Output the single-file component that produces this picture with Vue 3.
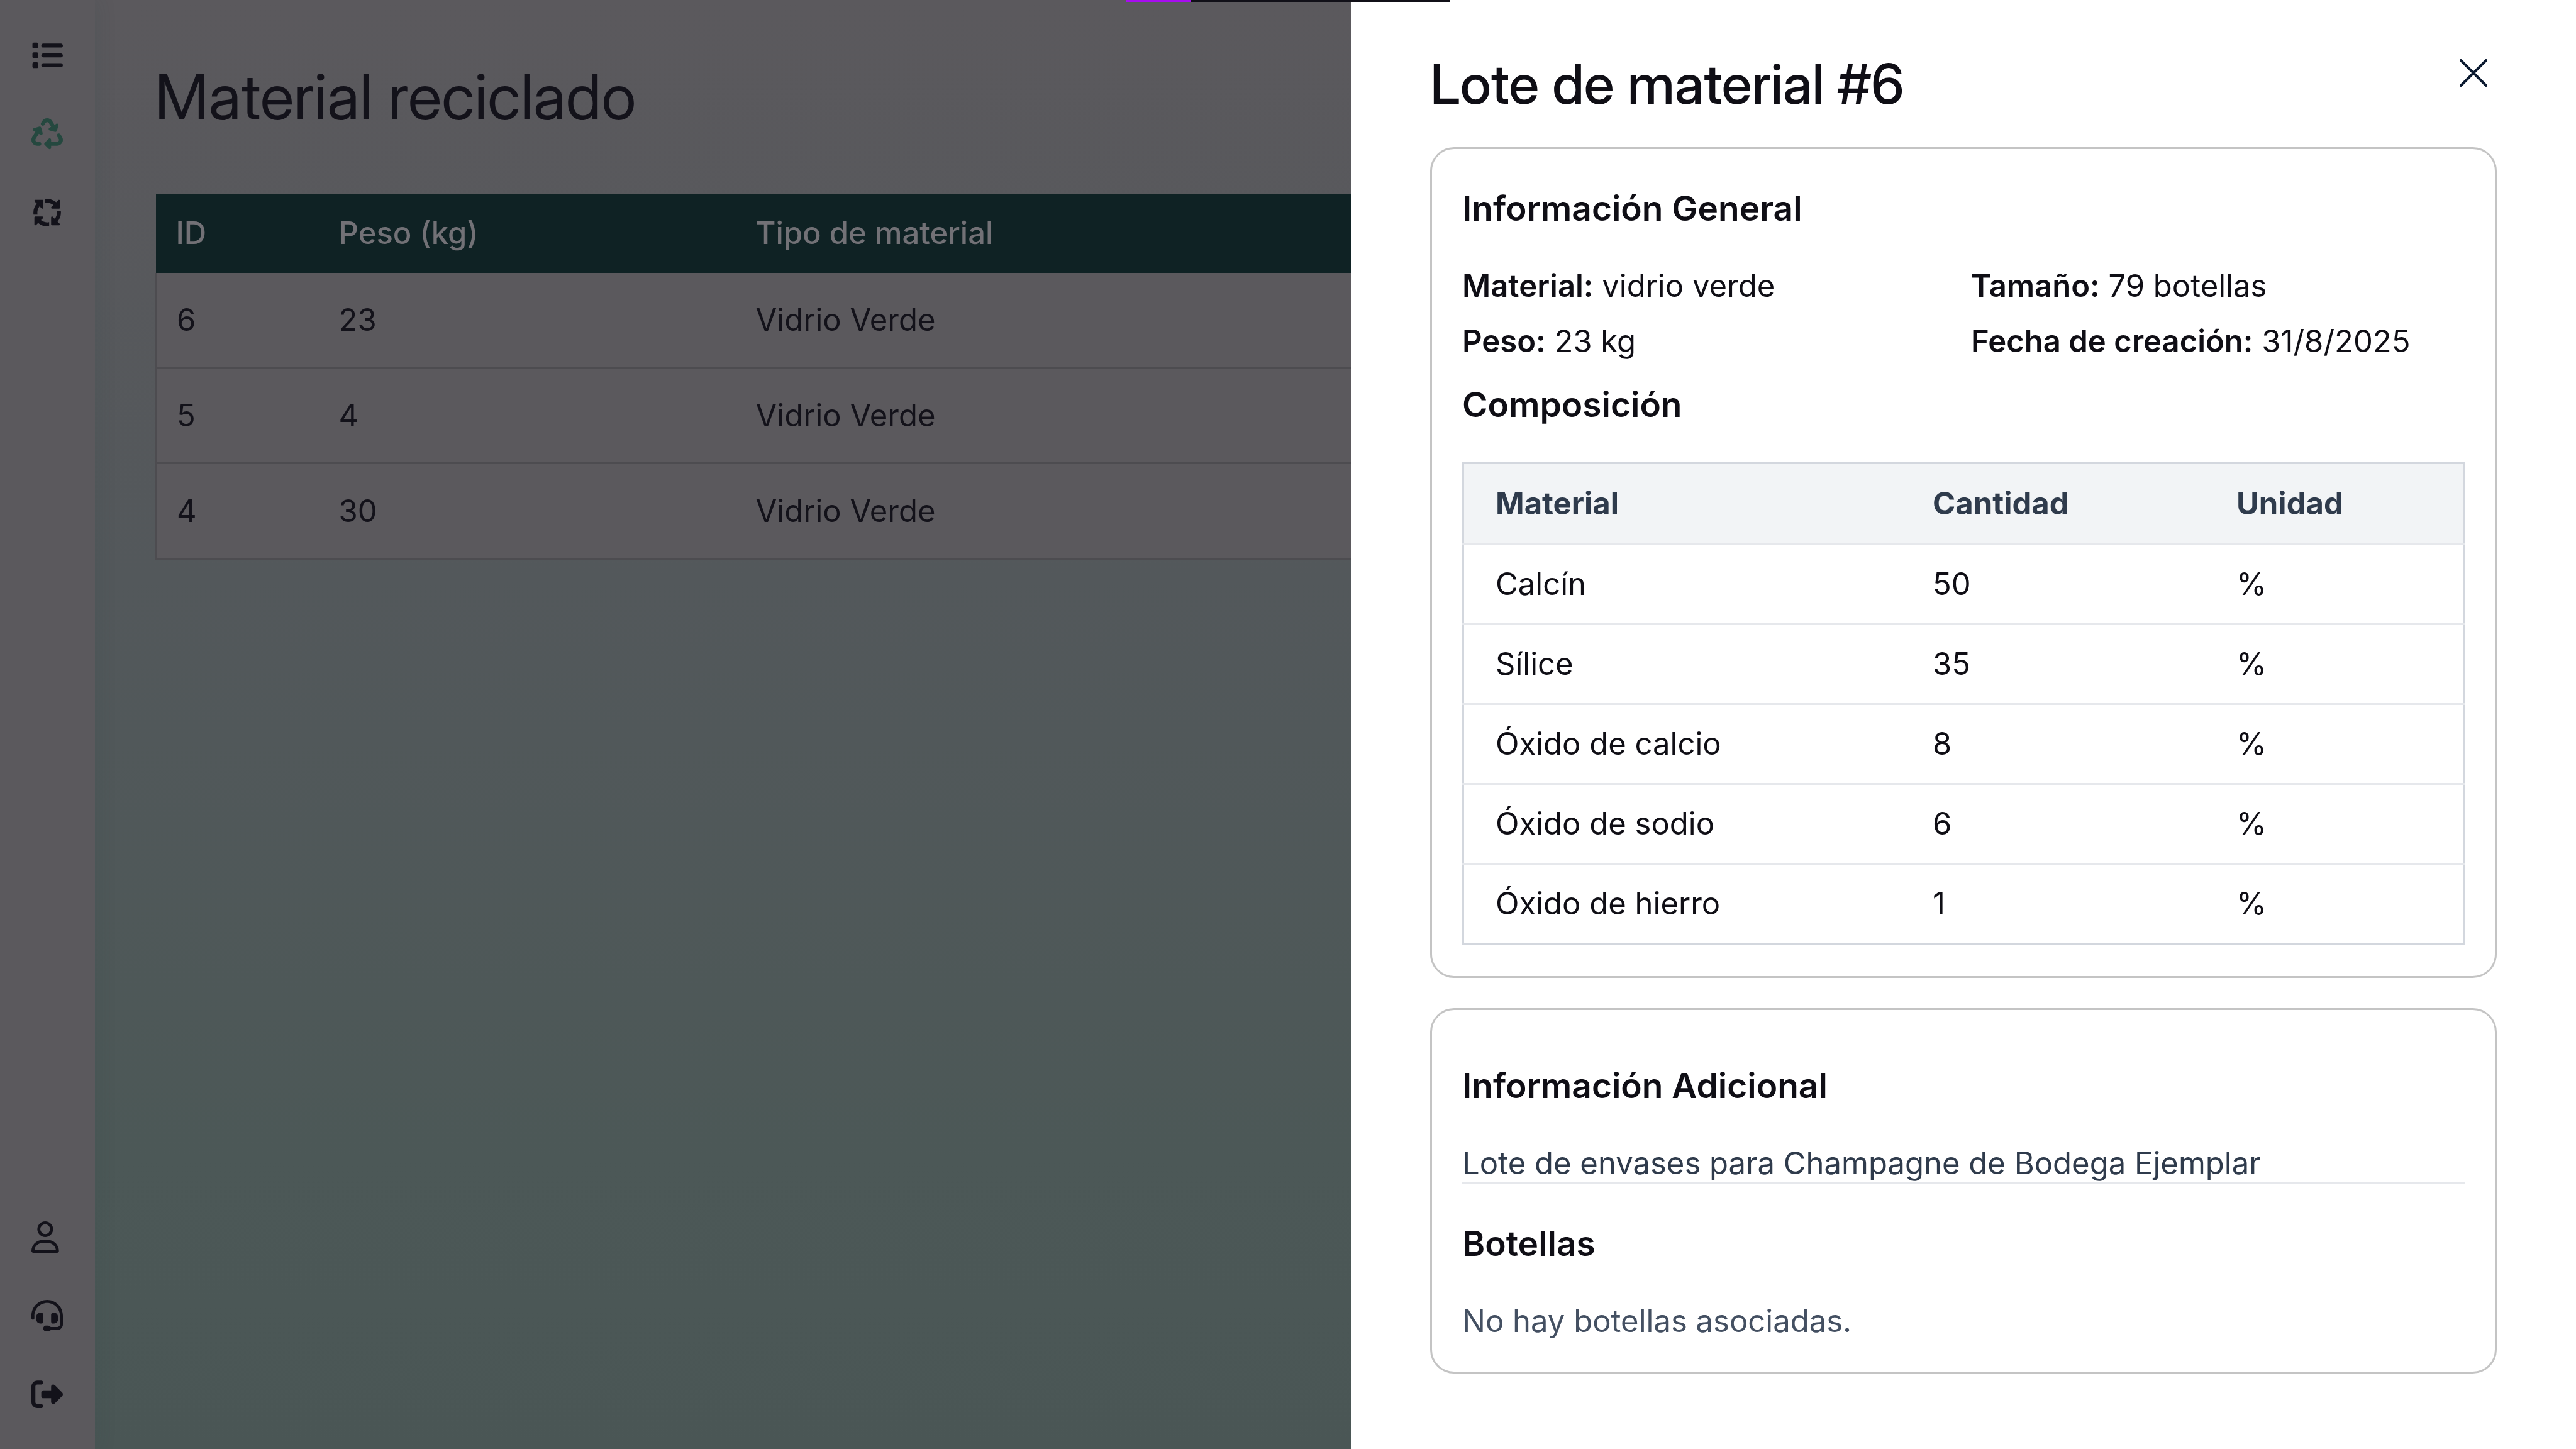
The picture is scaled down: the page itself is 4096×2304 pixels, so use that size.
<script setup>
const topLinks = [
  {
    label: 'Listado',
    active: false,
    box: '0 0 512 512',
    path: 'M40 48C26.7 48 16 58.7 16 72v48c0 13.3 10.7 24 24 24H88c13.3 0 24-10.7 24-24V72c0-13.3-10.7-24-24-24H40zM192 64c-17.7 0-32 14.3-32 32s14.3 32 32 32H480c17.7 0 32-14.3 32-32s-14.3-32-32-32H192zm0 160c-17.7 0-32 14.3-32 32s14.3 32 32 32H480c17.7 0 32-14.3 32-32s-14.3-32-32-32H192zm0 160c-17.7 0-32 14.3-32 32s14.3 32 32 32H480c17.7 0 32-14.3 32-32s-14.3-32-32-32H192zM16 232v48c0 13.3 10.7 24 24 24H88c13.3 0 24-10.7 24-24V232c0-13.3-10.7-24-24-24H40c-13.3 0-24 10.7-24 24zM40 368c-13.3 0-24 10.7-24 24v48c0 13.3 10.7 24 24 24H88c13.3 0 24-10.7 24-24V392c0-13.3-10.7-24-24-24H40z'
  },
  {
    label: 'Material reciclado',
    active: true,
    box: '0 0 512 512',
    path: 'M174.7 45.1C192.2 17 223 0 256 0s63.8 17 81.3 45.1l38.6 61.7 27-15.6c8.4-4.9 18.9-4.2 26.6 1.7s11.1 15.9 8.6 25.3l-23.4 87.4c-3.4 12.8-16.6 20.4-29.4 17l-87.4-23.4c-9.4-2.5-16.3-10.4-17.6-20s3.4-19.1 11.8-23.9l28.4-16.4L283 79c-5.8-9.3-16-15-27-15s-21.2 5.7-27 15l-17.5 28c-9.2 14.8-28.6 19.5-43.6 10.5c-15.3-9.2-20.2-29.2-10.7-44.4l17.5-28zM429.5 251.9c15-9 34.4-4.3 43.6 10.5l24.4 39.1c9.4 15.1 14.4 32.4 14.6 50.2c.3 53.1-42.7 96.4-95.8 96.4L320 448v32c0 9.7-5.8 18.5-14.8 22.2s-19.3 1.7-26.2-5.2l-64-64c-9.4-9.4-9.4-24.6 0-33.9l64-64c6.9-6.9 17.2-8.9 26.2-5.2s14.8 12.5 14.8 22.2v32l96.2 0c17.6 0 31.9-14.4 31.8-32c0-5.9-1.7-11.7-4.8-16.7l-24.4-39.1c-9.5-15.2-4.7-35.2 10.7-44.4zm-364.6-31L36 204.2c-8.4-4.9-13.1-14.3-11.8-23.9s8.2-17.5 17.6-20l87.4-23.4c12.8-3.4 26 4.2 29.4 17L182 241.2c2.5 9.4-.9 19.3-8.6 25.3s-18.2 6.6-26.6 1.7l-26.5-15.3L68.8 335.3c-3.1 5-4.8 10.8-4.8 16.7c-.1 17.6 14.2 32 31.8 32l32.2 0c17.7 0 32 14.3 32 32s-14.3 32-32 32l-32.2 0C42.7 448-.3 404.8 0 351.6c.1-17.8 5.1-35.1 14.6-50.2l50.3-80.5z'
  },
  {
    label: 'Procesos',
    active: false,
    box: '0 0 512 512',
    path: 'M256 96c38.4 0 73.7 13.5 101.3 36.1l-32.6 32.6c-4.6 4.6-5.9 11.5-3.5 17.4s8.3 9.9 14.8 9.9l112 0c8.8 0 16-7.2 16-16l0-112c0-6.5-3.9-12.3-9.9-14.8s-12.9-1.1-17.4 3.5l-34 34C363.4 52.6 312.1 32 256 32c-10.9 0-21.5 .8-32 2.3l0 64.7c10.3-2 21-3.1 32-3.1zM132.1 154.7l32.6 32.6c4.6 4.6 11.5 5.9 17.4 3.5s9.9-8.3 9.9-14.8l0-112c0-8.8-7.2-16-16-16L64 48c-6.5 0-12.3 3.9-14.8 9.9s-1.1 12.9 3.5 17.4l34 34C52.6 148.6 32 199.9 32 256c0 10.9 .8 21.5 2.3 32l64.7 0c-2-10.3-3.1-21-3.1-32c0-38.4 13.5-73.7 36.1-101.3zM477.7 224l-64.7 0c2 10.3 3.1 21 3.1 32c0 38.4-13.5 73.7-36.1 101.3l-32.6-32.6c-4.6-4.6-11.5-5.9-17.4-3.5s-9.9 8.3-9.9 14.8l0 112c0 8.8 7.2 16 16 16l112 0c6.5 0 12.3-3.9 14.8-9.9s1.1-12.9-3.5-17.4l-34-34C459.4 363.4 480 312.1 480 256c0-10.9-.8-21.5-2.3-32zM256 416c-38.4 0-73.7-13.5-101.3-36.1l32.6-32.6c4.6-4.6 5.9-11.5 3.5-17.4s-8.3-9.9-14.8-9.9L64 320c-8.8 0-16 7.2-16 16l0 112c0 6.5 3.9 12.3 9.9 14.8s12.9 1.1 17.4-3.5l34-34C148.6 459.4 199.9 480 256 480c10.9 0 21.5-.8 32-2.3l0-64.7c-10.3 2-21 3.1-32 3.1z'
  }
]

const bottomLinks = [
  {
    label: 'Perfil',
    box: '0 0 448 512',
    path: 'M304 128a80 80 0 1 0 -160 0 80 80 0 1 0 160 0zM96 128a128 128 0 1 1 256 0A128 128 0 1 1 96 128zM49.3 464H398.7c-8.9-63.3-63.3-112-129-112H178.3c-65.7 0-120.1 48.7-129 112zM0 482.3C0 383.8 79.8 304 178.3 304h91.4C368.2 304 448 383.8 448 482.3c0 16.4-13.3 29.7-29.7 29.7H29.7C13.3 512 0 498.7 0 482.3z'
  },
  {
    label: 'Soporte',
    box: '0 0 512 512',
    path: 'M256 48C141.1 48 48 141.1 48 256v40c0 13.3-10.7 24-24 24s-24-10.7-24-24V256C0 114.6 114.6 0 256 0S512 114.6 512 256V400.1c0 48.6-39.4 88-88.1 88L313.6 488c-8.3 14.3-23.8 24-41.6 24H240c-26.5 0-48-21.5-48-48s21.5-48 48-48h32c17.8 0 33.3 9.7 41.6 24l110.4 .1c22.1 0 40-17.9 40-40V256c0-114.9-93.1-208-208-208zM144 208h16c17.7 0 32 14.3 32 32V352c0 17.7-14.3 32-32 32H144c-35.3 0-64-28.7-64-64V272c0-35.3 28.7-64 64-64zm224 0c35.3 0 64 28.7 64 64v48c0 35.3-28.7 64-64 64H352c-17.7 0-32-14.3-32-32V240c0-17.7 14.3-32 32-32h16z'
  },
  {
    label: 'Cerrar sesión',
    box: '0 0 512 512',
    path: 'M377.9 105.9L500.7 228.7c7.2 7.2 11.3 17.1 11.3 27.3s-4.1 20.1-11.3 27.3L377.9 406.1c-6.4 6.4-15 9.9-24 9.9c-18.7 0-33.9-15.2-33.9-33.9l0-62.1-128 0c-17.7 0-32-14.3-32-32l0-64c0-17.7 14.3-32 32-32l128 0 0-62.1c0-18.7 15.2-33.9 33.9-33.9c9 0 17.6 3.6 24 9.9zM160 96L96 96c-17.7 0-32 14.3-32 32l0 256c0 17.7 14.3 32 32 32l64 0c17.7 0 32 14.3 32 32s-14.3 32-32 32l-64 0c-53 0-96-43-96-96L0 128C0 75 43 32 96 32l64 0c17.7 0 32 14.3 32 32s-14.3 32-32 32z'
  }
]

const batches = [
  { id: 6, weight: 23, material: 'Vidrio Verde' },
  { id: 5, weight: 4, material: 'Vidrio Verde' },
  { id: 4, weight: 30, material: 'Vidrio Verde' }
]

const composition = [
  { name: 'Calcín', amount: 50, unit: '%' },
  { name: 'Sílice', amount: 35, unit: '%' },
  { name: 'Óxido de calcio', amount: 8, unit: '%' },
  { name: 'Óxido de sodio', amount: 6, unit: '%' },
  { name: 'Óxido de hierro', amount: 1, unit: '%' }
]
</script>

<template>
  <div class="app">
    <nav class="sidebar">
      <div class="nav-group">
        <a
          v-for="link in topLinks"
          :key="link.label"
          href="#"
          class="nav-link"
          :class="{ active: link.active }"
          :aria-label="link.label"
        >
          <svg class="nav-icon" :viewBox="link.box" aria-hidden="true"><path :d="link.path" /></svg>
        </a>
      </div>
      <div class="nav-group">
        <a v-for="link in bottomLinks" :key="link.label" href="#" class="nav-link" :aria-label="link.label">
          <svg class="nav-icon" :viewBox="link.box" aria-hidden="true"><path :d="link.path" /></svg>
        </a>
      </div>
    </nav>

    <main class="content">
      <h1 class="page-title">Material reciclado</h1>
      <table class="batches">
        <thead>
          <tr>
            <th class="col-id">ID</th>
            <th class="col-weight">Peso (kg)</th>
            <th>Tipo de material</th>
          </tr>
        </thead>
        <tbody>
          <tr v-for="batch in batches" :key="batch.id">
            <td>{{ batch.id }}</td>
            <td>{{ batch.weight }}</td>
            <td>{{ batch.material }}</td>
          </tr>
        </tbody>
      </table>
    </main>

    <aside class="drawer" role="dialog" aria-labelledby="drawer-title">
      <header class="drawer-header">
        <h2 id="drawer-title" class="drawer-title">Lote de material #6</h2>
        <button type="button" class="close" aria-label="Cerrar">
          <svg class="close-icon" viewBox="0 0 44 44" aria-hidden="true"><path d="M2 2L42 42M42 2L2 42" /></svg>
        </button>
      </header>

      <section class="card">
        <h3 class="section-title">Información General</h3>
        <div class="facts">
          <p><strong>Material:</strong> vidrio verde</p>
          <p><strong>Tamaño:</strong> 79 botellas</p>
          <p><strong>Peso:</strong> 23 kg</p>
          <p><strong>Fecha de creación:</strong> 31/8/2025</p>
        </div>
        <h3 class="section-title">Composición</h3>
        <table class="composition">
          <thead>
            <tr>
              <th class="col-name">Material</th>
              <th class="col-amount">Cantidad</th>
              <th>Unidad</th>
            </tr>
          </thead>
          <tbody>
            <tr v-for="row in composition" :key="row.name">
              <td>{{ row.name }}</td>
              <td>{{ row.amount }}</td>
              <td>{{ row.unit }}</td>
            </tr>
          </tbody>
        </table>
      </section>

      <section class="card card-extra">
        <h3 class="section-title">Información Adicional</h3>
        <p class="note">Lote de envases para Champagne de Bodega Ejemplar</p>
        <h3 class="section-title bottles-title">Botellas</h3>
        <p class="empty">No hay botellas asociadas.</p>
      </section>
    </aside>

    <div class="loader" aria-hidden="true"><div class="loader-fill"></div></div>
  </div>
</template>

<style>
body {
  margin: 0;
}
</style>

<style scoped>
.app {
  display: flex;
  min-height: 100vh;
  overflow: hidden;
  font-family: Inter, "Liberation Sans", sans-serif;
  font-size: 49px;
  line-height: 60px;
  color: #0f0e15;
}

h1,
h2,
h3,
p {
  margin: 0;
}

.sidebar {
  display: flex;
  flex-direction: column;
  justify-content: space-between;
  flex: none;
  box-sizing: border-box;
  width: 151px;
  padding: 50px;
  background: #5b595d;
  box-shadow: 0 0 32px rgba(40, 70, 70, 0.16);
  z-index: 1;
}

.nav-group {
  display: flex;
  flex-direction: column;
  gap: 50px;
}

.nav-link {
  display: flex;
  align-items: center;
  height: 75px;
  color: #13121a;
}

.nav-link.active {
  color: #25483f;
}

.nav-icon {
  height: 50px;
  fill: currentColor;
}

.content {
  flex: 1;
  padding: 99px 95px;
  background: linear-gradient(#5b595d 0%, #53585b 40%, #4c5857 80%, #4a5655 100%);
}

.page-title {
  margin-bottom: 99px;
  font-family: "Inter Display", Inter, "Liberation Sans", sans-serif;
  font-size: 100px;
  font-weight: 400;
  line-height: 110px;
  color: #13121a;
}

.batches,
.composition {
  width: 100%;
  border-collapse: collapse;
  table-layout: fixed;
}

.batches th,
.batches td {
  height: 149px;
  padding: 0 32px;
  text-align: left;
}

.batches th {
  height: 126px;
  font-weight: 500;
  color: #727176;
  background: #0f2224;
}

.batches tbody {
  color: #13121a;
  background: #5b595d;
}

.batches tbody tr {
  border: 3px solid #4d4c50;
}

.batches tbody tr:first-child {
  border-top: 0;
}

.col-id {
  width: 195px;
}

.col-weight {
  width: 599px;
}

.drawer {
  position: absolute;
  top: 0;
  right: 0;
  bottom: 0;
  box-sizing: border-box;
  width: 1948px;
  padding: 85px 126px 0;
  background: #fff;
  z-index: 2;
}

.drawer-header {
  display: flex;
  justify-content: space-between;
  align-items: flex-start;
  margin-bottom: 53px;
}

.drawer-title {
  font-family: "Inter Display", Inter, "Liberation Sans", sans-serif;
  font-size: 88px;
  font-weight: 500;
  line-height: 96px;
}

.close {
  display: flex;
  padding: 9px 15px;
  border: 0;
  background: none;
}

.close-icon {
  width: 44px;
  height: 44px;
  fill: none;
  stroke: #0b1a30;
  stroke-width: 4;
  stroke-linecap: round;
}

.card {
  margin-bottom: 48px;
  padding: 52px 48px 50px;
  border: 3px solid #c4c4c4;
  border-radius: 38px;
}

.section-title {
  font-size: 55px;
  font-weight: 600;
  line-height: 84px;
}

.facts {
  display: grid;
  grid-template-columns: 1fr 1fr;
  gap: 28px 24px;
  margin: 52px 0 28px;
}

.facts strong {
  font-weight: 600;
}

.composition {
  margin-top: 50px;
  border: 3px solid #d3d7de;
}

.composition th,
.composition td {
  height: 124px;
  padding: 0 50px;
  text-align: left;
}

.composition th {
  height: 126px;
  font-weight: 700;
  color: #2f3b4c;
  background: #f2f4f6;
}

.composition tbody tr {
  border-top: 3px solid #e6e8ec;
}

.col-name {
  width: 595px;
}

.col-amount {
  width: 383px;
}

.card-extra {
  padding-top: 78px;
}

.note {
  margin-top: 52px;
  border-bottom: 3px solid #e6e8ec;
  color: #2f3b4c;
}

.bottles-title {
  margin-top: 52px;
}

.empty {
  margin-top: 52px;
  color: #445062;
}

.loader {
  position: absolute;
  top: 0;
  left: 50%;
  width: 514px;
  height: 3px;
  margin-left: -257px;
  background: #111018;
  z-index: 3;
}

.loader-fill {
  width: 20%;
  height: 100%;
  background: #a80df0;
}
</style>
